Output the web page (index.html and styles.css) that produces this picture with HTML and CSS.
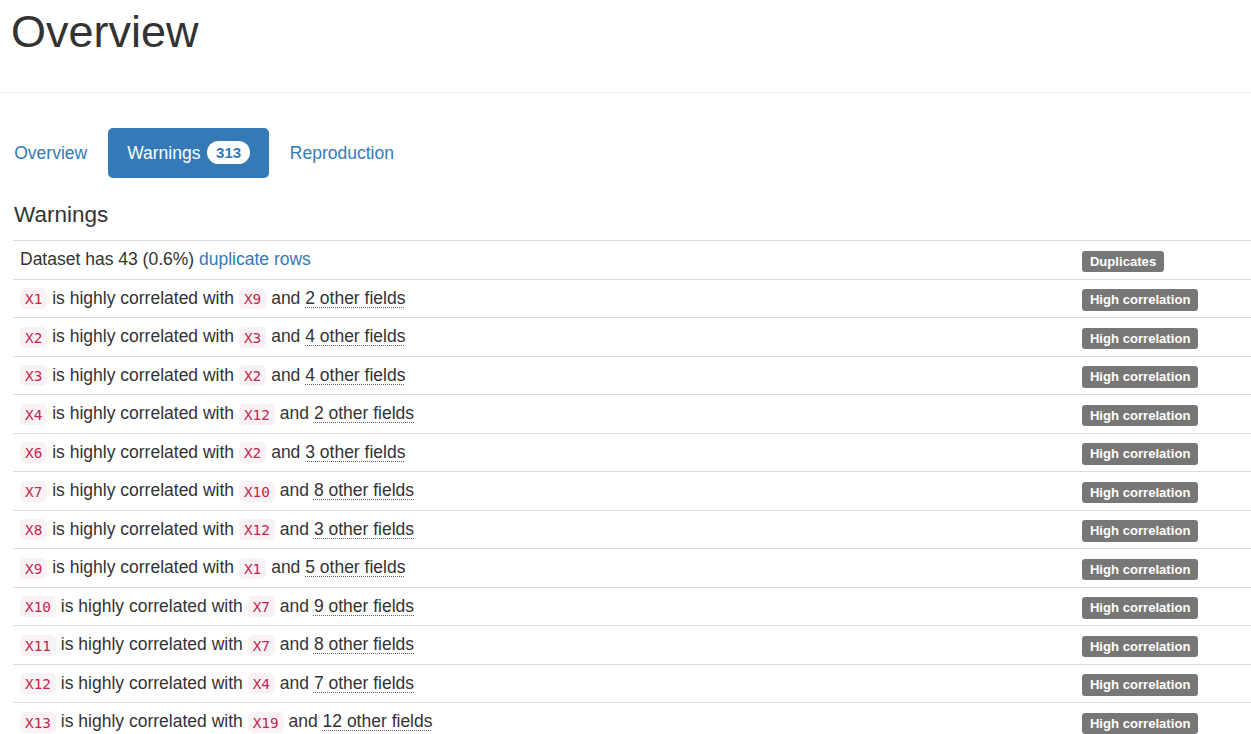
FILE: index.html
```html
<!DOCTYPE html>
<html lang="en">
<head>
<meta charset="utf-8">
<title>Overview</title>
<link rel="stylesheet" href="styles.css">
</head>
<body>
<div class="page">
  <header class="page-header">
    <h1 class="title">Overview</h1>
  </header>

  <ul class="pills">
    <li><a href="#overview" class="pill">Overview</a></li>
    <li><a href="#warnings" class="pill active">Warnings <span class="badge">313</span></a></li>
    <li><a href="#reproduction" class="pill">Reproduction</a></li>
  </ul>

  <h4 class="section-title">Warnings</h4>

  <table class="warnings">
    <colgroup><col><col class="col-label"></colgroup>
    <tbody>
      <tr><td>Dataset has 43 (0.6%) <a href="#dup" class="link">duplicate rows</a></td><td class="cell-label"><span class="label">Duplicates</span></td></tr>
      <tr><td><code>X1</code> is highly correlated with <code>X9</code> and <abbr title="X9, X2">2 other fields</abbr></td><td class="cell-label"><span class="label">High correlation</span></td></tr>
      <tr><td><code>X2</code> is highly correlated with <code>X3</code> and <abbr title="fields">4 other fields</abbr></td><td class="cell-label"><span class="label">High correlation</span></td></tr>
      <tr><td><code>X3</code> is highly correlated with <code>X2</code> and <abbr title="fields">4 other fields</abbr></td><td class="cell-label"><span class="label">High correlation</span></td></tr>
      <tr><td><code>X4</code> is highly correlated with <code>X12</code> and <abbr title="fields">2 other fields</abbr></td><td class="cell-label"><span class="label">High correlation</span></td></tr>
      <tr><td><code>X6</code> is highly correlated with <code>X2</code> and <abbr title="fields">3 other fields</abbr></td><td class="cell-label"><span class="label">High correlation</span></td></tr>
      <tr><td><code>X7</code> is highly correlated with <code>X10</code> and <abbr title="fields">8 other fields</abbr></td><td class="cell-label"><span class="label">High correlation</span></td></tr>
      <tr><td><code>X8</code> is highly correlated with <code>X12</code> and <abbr title="fields">3 other fields</abbr></td><td class="cell-label"><span class="label">High correlation</span></td></tr>
      <tr><td><code>X9</code> is highly correlated with <code>X1</code> and <abbr title="fields">5 other fields</abbr></td><td class="cell-label"><span class="label">High correlation</span></td></tr>
      <tr><td><code>X10</code> is highly correlated with <code>X7</code> and <abbr title="fields">9 other fields</abbr></td><td class="cell-label"><span class="label">High correlation</span></td></tr>
      <tr><td><code>X11</code> is highly correlated with <code>X7</code> and <abbr title="fields">8 other fields</abbr></td><td class="cell-label"><span class="label">High correlation</span></td></tr>
      <tr><td><code>X12</code> is highly correlated with <code>X4</code> and <abbr title="fields">7 other fields</abbr></td><td class="cell-label"><span class="label">High correlation</span></td></tr>
      <tr><td><code>X13</code> is highly correlated with <code>X19</code> and <abbr title="fields">12 other fields</abbr></td><td class="cell-label"><span class="label">High correlation</span></td></tr>
    </tbody>
  </table>
</div>
</body>
</html>
```

FILE: styles.css
```css
html, body {
  margin: 0;
  padding: 0;
  overflow: hidden;
  background: #fff;
}

body {
  font-family: "Liberation Sans", Arial, sans-serif;
  font-size: 17.5px;
  line-height: 25px;
  color: #333;
}

.page {
  padding-left: 13px;
}

.page-header {
  margin-left: -13px;
  padding: 7px 0 35.5px 11px;
  border-bottom: 1px solid #eee;
}

.title {
  margin: 0;
  font-size: 45px;
  font-weight: 500;
  line-height: 49.5px;
  color: #333;
}

.pills {
  list-style: none;
  margin: 35px 0 0 -17.5px;
  padding: 0;
  display: flex;
  gap: 2.5px;
}

.pill {
  display: block;
  padding: 12.5px 18.75px;
  border-radius: 5px;
  color: #337ab7;
  text-decoration: none;
  line-height: 25px;
}

.pill.active {
  background: #337ab7;
  color: #fff;
}

.badge {
  display: inline-block;
  position: relative;
  top: -1.25px;
  min-width: 12.5px;
  padding: 3.75px 8.75px;
  font-size: 15px;
  font-weight: 700;
  line-height: 1;
  text-align: center;
  vertical-align: middle;
  border-radius: 12.5px;
  background: #fff;
  color: #337ab7;
  margin-left: 2px;
}

.section-title {
  margin: 25px 0 12.25px 1px;
  font-size: 22.5px;
  font-weight: 500;
  line-height: 24.75px;
}

.warnings {
  width: 100%;
  border-collapse: collapse;
  table-layout: fixed;
}

.col-label {
  width: 175px;
}

.warnings td {
  padding: 6.25px 6.25px 6.25px 7px;
  border-top: 1px solid #ddd;
  vertical-align: top;
  white-space: nowrap;
  line-height: 25px;
}

.warnings td.cell-label {
  padding-left: 6px;
}

.link {
  color: #337ab7;
  text-decoration: none;
}

code {
  font-family: "DejaVu Sans Mono", "Liberation Mono", monospace;
  font-size: 14.4px;
  line-height: 1;
  padding: 2.5px 5px;
  color: #c7254e;
  background: #f9f2f4;
  border-radius: 5px;
}

abbr {
  text-decoration: underline dotted #666;
  text-decoration-thickness: 1px;
  text-underline-offset: 2.5px;
  cursor: help;
}

.label {
  display: inline;
  padding: 0.2em 0.6em 0.3em;
  font-size: 13.125px;
  font-weight: 700;
  line-height: 1;
  color: #fff;
  background: #777;
  border-radius: 0.25em;
  white-space: nowrap;
  vertical-align: baseline;
}
```
